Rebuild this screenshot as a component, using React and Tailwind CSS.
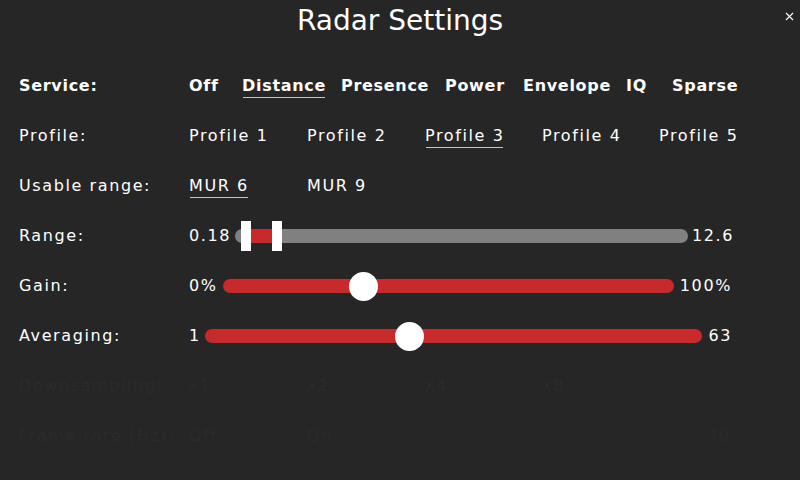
import React from "react";

const Label = ({ children, faint }) => (
  <div className={`w-[189px] shrink-0 pl-[19px] ${faint ? "text-[#2b2b2b]" : "text-white"}`}>{children}</div>
);

function Choice({ children, w, selected, bold }) {
  return (
    <div className={`${w} shrink-0`}>
      <span className={`relative ${bold ? "font-bold tracking-[0.7px]" : ""}`}>
        {children}
        {selected && (
          <span className="absolute bottom-[-3px] left-[1px] right-[1px] h-px bg-[#e0e000]" />
        )}
      </span>
    </div>
  );
}

function Row({ children }) {
  return <div className="flex h-[50px] items-center">{children}</div>;
}

export default function App() {
  return (
    <div
      className="relative h-[480px] w-[800px] overflow-hidden bg-[#262626] text-[16px] leading-[20px] tracking-[1.6px] text-white"
      style={{ fontFamily: '"DejaVu Sans", sans-serif' }}
    >
      <div className="flex h-[41px] items-center justify-center pt-[1px] text-[28px] leading-[32px] tracking-normal">
        Radar Settings
      </div>
      <svg className="absolute left-[785px] top-[12px]" width="9" height="9" viewBox="0 0 9 9">
        <path d="M1 1L8 8M8 1L1 8" stroke="#ffffff" strokeWidth="1.1" />
      </svg>

      <div className="mt-[20px] flex flex-col">
        <Row>
          <Label>
            <span className="font-bold tracking-[0.7px]">Service:</span>
          </Label>
          <Choice w="w-[53px]" bold>Off</Choice>
          <Choice w="w-[99px]" bold selected>Distance</Choice>
          <Choice w="w-[104px]" bold>Presence</Choice>
          <Choice w="w-[78px]" bold>Power</Choice>
          <Choice w="w-[103px]" bold>Envelope</Choice>
          <Choice w="w-[46px]" bold>IQ</Choice>
          <Choice w="w-[80px]" bold>Sparse</Choice>
        </Row>

        <Row>
          <Label>Profile:</Label>
          <Choice w="w-[118px]">Profile 1</Choice>
          <Choice w="w-[118px]">Profile 2</Choice>
          <Choice w="w-[117px]" selected>Profile 3</Choice>
          <Choice w="w-[117px]">Profile 4</Choice>
          <Choice w="w-[100px]">Profile 5</Choice>
        </Row>

        <Row>
          <Label>Usable range:</Label>
          <Choice w="w-[118px]" selected>MUR 6</Choice>
          <Choice w="w-[118px]">MUR 9</Choice>
        </Row>

        <Row>
          <Label>Range:</Label>
          <div className="flex w-[545px] items-center">
            <span>0.18</span>
            <div className="relative ml-[4px] mr-[4px] h-[14px] flex-1 rounded-full bg-[#808080]">
              <div className="absolute left-[15px] top-0 h-[14px] w-[23px] bg-[#c8292b]" />
              <div className="absolute left-[6px] top-[-8px] h-[30px] w-[10px] bg-white" />
              <div className="absolute left-[37px] top-[-8px] h-[30px] w-[10px] bg-white" />
            </div>
            <span>12.6</span>
          </div>
        </Row>

        <Row>
          <Label>Gain:</Label>
          <div className="flex w-[543px] items-center">
            <span>0%</span>
            <div className="relative ml-[5px] mr-[6px] h-[14px] flex-1 rounded-full bg-[#c8292b]">
              <div className="absolute left-[126px] top-[-7.5px] h-[29px] w-[29px] rounded-full bg-white" />
            </div>
            <span>100%</span>
          </div>
        </Row>

        <Row>
          <Label>Averaging:</Label>
          <div className="flex w-[543px] items-center">
            <span>1</span>
            <div className="relative ml-[4px] mr-[6px] h-[14px] flex-1 rounded-full bg-[#c8292b]">
              <div className="absolute left-[190px] top-[-7.5px] h-[29px] w-[29px] rounded-full bg-white" />
            </div>
            <span>63</span>
          </div>
        </Row>

        <div className="text-[#2b2b2b]">
          <Row>
            <Label faint>Downsampling:</Label>
            <Choice w="w-[118px]">x1</Choice>
            <Choice w="w-[118px]">x2</Choice>
            <Choice w="w-[117px]">x4</Choice>
            <Choice w="w-[117px]">x8</Choice>
          </Row>
          <Row>
            <Label faint>Frame rate (Hz):</Label>
            <Choice w="w-[118px]">Off</Choice>
            <Choice w="w-[400px]">On</Choice>
            <span>30</span>
          </Row>
        </div>
      </div>
    </div>
  );
}
